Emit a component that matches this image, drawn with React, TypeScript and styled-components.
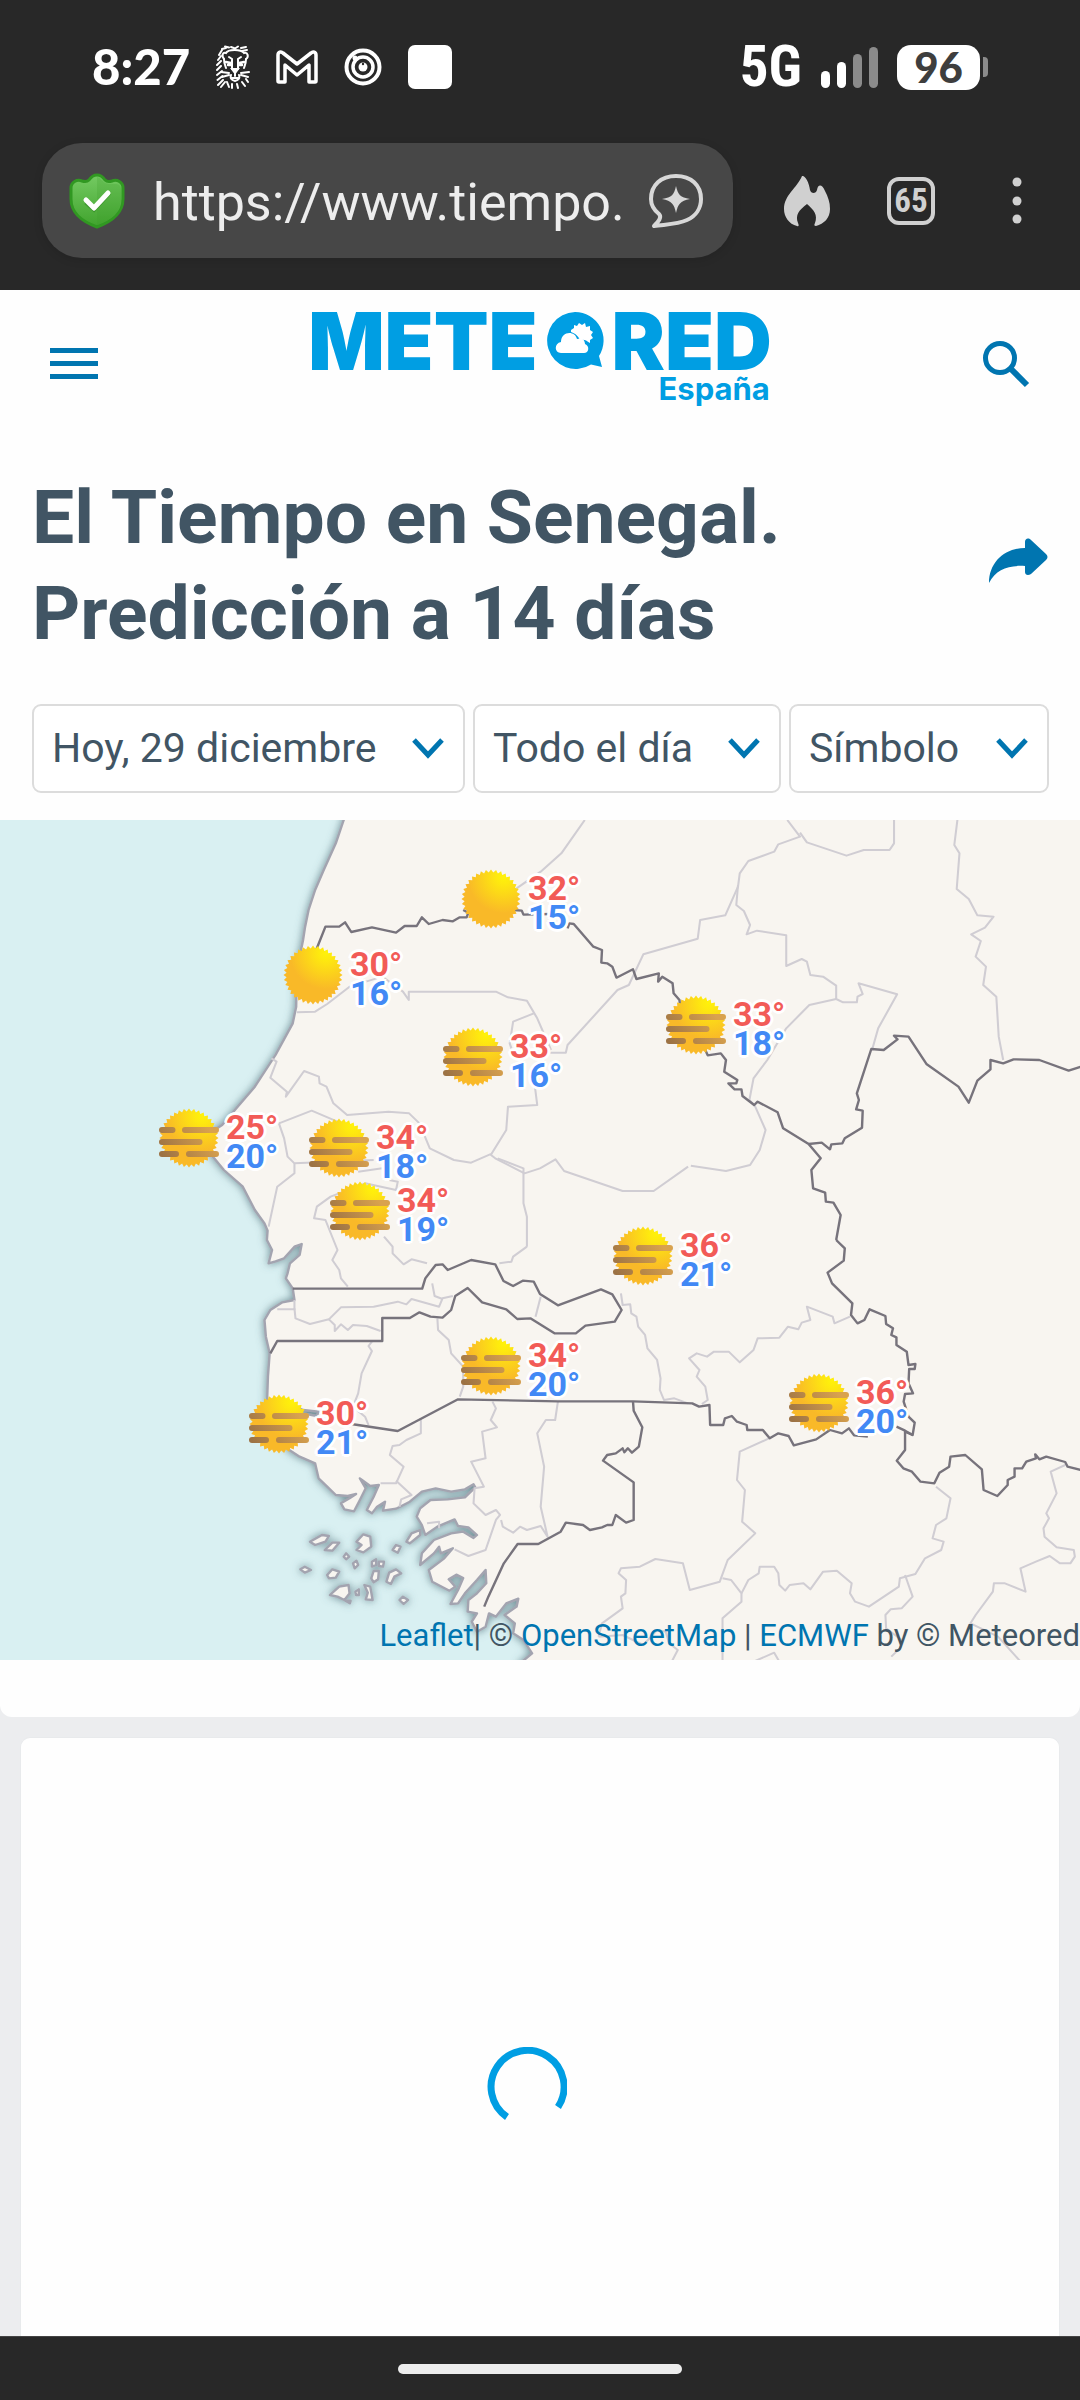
import React from 'react';
import styled, { createGlobalStyle } from 'styled-components';

const GlobalStyle = createGlobalStyle`
  *, *::before, *::after { box-sizing: border-box; }
  html, body { margin: 0; padding: 0; background: #ecedef; }
  body { font-family: Roboto, "Liberation Sans", sans-serif; color: #415564; }
  button { border: 0; padding: 0; margin: 0; background: none; font: inherit; color: inherit; cursor: pointer; }
  svg { display: block; flex: none; }
`;

/* ---------- frame ---------- */
const Screen = styled.div`
  min-height: 100vh;
  display: flex;
  flex-direction: column;
`;

const Chrome = styled.div`
  background: #282828;
  color: #fff;
  height: 290px;
`;

const StatusBar = styled.div`
  height: 143px;
  padding: 0 92px;
  padding-top: 38px;
  display: flex;
  align-items: flex-start;
  justify-content: space-between;
`;

const StatusGroup = styled.div<{ $gap: number }>`
  display: flex;
  align-items: center;
  gap: ${(p) => p.$gap}px;
  height: 58px;
`;

const Clock = styled.time`
  padding-bottom: 3px;
  font: 900 49px/54px Lato, Roboto, sans-serif;
`;

const Network = styled.span`
  font: 700 57px/58px "Roboto Condensed", "Liberation Sans Narrow", Roboto, sans-serif;
`;

const Bars = styled.span`
  display: flex;
  align-items: flex-end;
  gap: 7px;
  height: 42px;
`;

const Bar = styled.span<{ $height: number; $on: boolean }>`
  width: 9px;
  height: ${(p) => p.$height}px;
  border-radius: 5px;
  background: ${(p) => (p.$on ? '#fff' : '#8b8b8b')};
`;

const Battery = styled.span`
  display: flex;
  align-items: center;
  gap: 3px;
`;

const BatteryBody = styled.span`
  width: 83px;
  height: 45px;
  border-radius: 14px;
  background: #fff;
  color: #3e3e3e;
  text-align: center;
  font: 900 42px/44px Lato, Roboto, sans-serif;
`;

const BatteryTip = styled.span`
  width: 5px;
  height: 20px;
  border-radius: 0 4px 4px 0;
  background: #8b8b8b;
`;

const AppBadge = styled.span`
  width: 44px;
  height: 44px;
  border-radius: 7px;
  background: #fff;
`;

const Toolbar = styled.div`
  display: flex;
  align-items: center;
  padding: 0 35px 0 42px;
  color: #d0d0d0;
`;

const AddressBar = styled.form`
  flex: 1;
  min-width: 0;
  height: 115px;
  margin-right: 48px;
  padding: 0 30px 0 27px;
  border-radius: 40px;
  background: #474747;
  box-shadow: 0 2px 10px rgba(0, 0, 0, 0.12);
  display: flex;
  align-items: center;
`;

const Address = styled.input`
  flex: 1;
  min-width: 0;
  margin: 0 26px 0 28px;
  padding: 4px 0 0;
  border: 0;
  outline: 0;
  background: none;
  color: #ededed;
  font: 400 52px/64px Roboto, sans-serif;
`;

const ToolButton = styled.button`
  display: flex;
  justify-content: center;
  width: 52px;
  margin-right: 52px;
  &:last-child { margin-right: 0; width: 56px; }
`;

const TabCount = styled.span`
  width: 48px;
  height: 48px;
  border: 4px solid #d0d0d0;
  border-radius: 12px;
  text-align: center;
  font: 700 33px/40px "Roboto Condensed", "Liberation Sans Narrow", Roboto, sans-serif;
`;

/* ---------- page ---------- */
const Page = styled.main`
  flex: 1;
  display: flex;
  flex-direction: column;
`;

const Article = styled.section`
  background: #fefefe;
  border-radius: 0 0 12px 12px;
  padding-bottom: 57px;
`;

const Header = styled.header`
  height: 148px;
  padding: 0 50px;
  display: flex;
  align-items: center;
  justify-content: space-between;
`;

const Brand = styled.a`
  display: flex;
  flex-direction: column;
  align-items: flex-end;
  height: 122px;
  color: #009ee3;
  text-decoration: none;
`;

const Wordmark = styled.span`
  display: flex;
  align-items: center;
  gap: 8px;
  font: 900 80px/76px Inter, "DejaVu Sans", sans-serif;
`;

const Country = styled.span`
  padding-right: 2px;
  font: 700 31px/20px Inter, "DejaVu Sans", sans-serif;
`;

const TitleRow = styled.div`
  display: flex;
  align-items: center;
  justify-content: space-between;
  padding: 31px 32px 43px;
  > button { padding-bottom: 8px; }
`;

const Title = styled.h1`
  margin: 0;
  max-width: 840px;
  font: 700 75px/96px Roboto, sans-serif;
`;

const Filters = styled.form`
  display: flex;
  gap: 8px;
  padding: 0 31px 27px 32px;
`;

const Field = styled.label<{ $grow: number }>`
  flex: ${(p) => p.$grow} 1 0;
  min-width: 0;
  display: grid;
  align-items: center;
  > * { grid-area: 1 / 1; }
  > svg { justify-self: end; margin-right: 21px; pointer-events: none; }
`;

const Select = styled.select`
  appearance: none;
  width: 100%;
  height: 89px;
  margin: 0;
  padding: 0 56px 2px 18px;
  border: 2px solid #dcdcdc;
  border-radius: 9px;
  background: #fff;
  color: #415564;
  font: 400 41px/48px Roboto, sans-serif;
`;

const MapBox = styled.div`
  position: relative;
  height: 840px;
  overflow: hidden;
  background: #d9f0f2;
  > svg { width: 100%; height: 100%; }
`;

const Pin = styled.div`
  position: absolute;
  transform: translate(-31px, -33px);
  display: flex;
  align-items: center;
  gap: 6px;
`;

const Temps = styled.div`
  padding-top: 8px;
  font: 700 34px/29px Roboto, sans-serif;
  text-shadow: 3px 0 #fff, -3px 0 #fff, 0 3px #fff, 0 -3px #fff, 2px 2px #fff, -2px -2px #fff, 2px -2px #fff, -2px 2px #fff;
`;

const Temp = styled.div<{ $hot?: boolean }>`
  position: relative;
  color: ${(p) => (p.$hot ? '#f25b57' : '#4289f5')};
`;

const Attribution = styled.p`
  position: absolute;
  right: 0;
  bottom: 4px;
  margin: 0;
  white-space: nowrap;
  font: 400 31px/40px Roboto, sans-serif;
  a { color: #0075b0; text-decoration: none; }
`;

const Card = styled.section`
  flex: 1;
  margin: 20px 20px 0;
  min-height: 400px;
  border: 1px solid #e8eaec;
  border-bottom: 0;
  border-radius: 10px 10px 0 0;
  background: #fefefe;
  display: flex;
  justify-content: center;
  align-items: flex-start;
  padding: 309px 26px 0 0;
`;

const GestureBar = styled.footer`
  position: sticky;
  bottom: 0;
  height: 64px;
  border-top: 1px solid #444;
  background: #282828;
  display: flex;
  justify-content: center;
  align-items: center;
`;

const Handle = styled.button`
  width: 284px;
  height: 10px;
  border-radius: 5px;
  background: #ededed;
`;

/* ---------- icons ---------- */
const LionIcon = () => (
  <svg width="34" height="44" viewBox="0 0 34 44" fill="none" stroke="#fff" strokeWidth="2" strokeLinecap="round">
    <path d="M6 4l4-1M9 1.500l4 1M15 2l4 1.500 3-2M25 3l5-1M26 6l5-1M3 10l3-5M2 15l3-4M1 20l4-4M1 25l4-4M1 30l5-4M1.500 35l5-4M2 40l5-5M5 42l4-5M11 37l2 5M16 39v4M21 39l1 4M26 37l3 4M30 34l2 3" />
    <path d="M8 14C5 10 7 7 10 8c2-4 15-4 18 0 4-1 5 4 2 6" strokeWidth="2" />
    <path d="M8 14c0 4 1 6 2 9M30 14c0 4-1 6-2 9M13 12l3 2v10M25 12l-3 2v10" />
    <path d="M10 17l5 1M23 18l5-1M12 20h3M23 20h3" strokeWidth="2.500" />
    <path d="M16 24h6l-3 4z" fill="#fff" />
    <path d="M19 28v3M15 30c-1 3 0 5 4 6 4-1 5-3 4-6M16 33h6M5 27l8 1M6 32l7-2M33 27l-8 1M32 32l-7-2" />
  </svg>
);

const MailIcon = () => (
  <svg width="42" height="34" viewBox="0 0 42 34" fill="none" stroke="#fff" strokeWidth="3.500" strokeLinejoin="round">
    <path d="M2 5v26a1 1 0 0 0 1 1h6V15l12 10 12-10v17h6a1 1 0 0 0 1-1V5c0-3-3-4-5-2L21 14 7 3C5 1 2 2 2 5z" />
  </svg>
);

const TargetIcon = () => (
  <svg width="38" height="38" viewBox="0 0 38 38" fill="none" stroke="#fff">
    <circle cx="19" cy="19" r="16.500" strokeWidth="4" />
    <circle cx="19" cy="19" r="10" strokeWidth="3.500" />
    <circle cx="19" cy="19" r="4.500" fill="#fff" stroke="none" />
    <circle cx="11" cy="10" r="2.500" fill="#fff" stroke="none" />
    <circle cx="19" cy="16" r="1.200" fill="#282828" stroke="none" />
  </svg>
);

const ShieldIcon = () => (
  <svg width="56" height="56" viewBox="0 0 56 56">
    <defs>
      <linearGradient id="shield" x1="0" y1="0" x2="0" y2="1">
        <stop offset="0" stopColor="#74ca62" />
        <stop offset="1" stopColor="#40a32d" />
      </linearGradient>
    </defs>
    <path d="M28 2c4 0 6 2 8 5 2 2 4 2 7 1 5-2 11 1 11 7v11c0 14-10 22-26 28C12 48 2 40 2 26V15C2 9 8 6 13 8c3 1 5 1 7-1 2-3 4-5 8-5z" fill="url(#shield)" stroke="#319822" strokeWidth="3" />
    <path d="M28 4c4 1 5 4 8 6 6 3 15-2 16 6v10c0 13-8 20-24 26z" fill="#399c28" opacity=".22" />
    <path d="M17 29l8 7 15-16" fill="none" stroke="#277c1c" strokeWidth="5" opacity=".5" />
    <path d="M17 27l8 8 14-15" fill="none" stroke="#fff" strokeWidth="5" strokeLinecap="round" strokeLinejoin="round" />
  </svg>
);

const AssistantIcon = () => (
  <svg width="54" height="56" viewBox="0 0 54 56" fill="none">
    <path d="M27 3C12 3 2 12 2 26c0 6 3 11 8 15 3 3 0 7-5 12 16-2 24-2 33-6 9-4 14-12 14-21C52 12 42 3 27 3z" stroke="#d8d8d8" strokeWidth="4" strokeLinejoin="round" />
    <path d="M27 13c2 9 4 11 14 13-10 2-12 5-14 14-2-9-4-12-14-14 10-2 12-4 14-13z" fill="#d8d8d8" />
  </svg>
);

const FlameIcon = () => (
  <svg width="48" height="52" viewBox="0 0 48 52" fill="#d0d0d0">
    <path d="M19 1c3-1 7 6 8 14 1 4 6 4 7 0 1-6 5-6 8 1 3 6 5 11 5 18 0 9-6 15-14 17-2 0-2-1-1-3 3-8-1-13-8-19-8 6-12 11-9 19 1 2 1 4-1 3C6 49 1 42 1 34 1 20 14 13 19 1z" />
  </svg>
);

const MoreIcon = () => (
  <svg width="10" height="48" viewBox="0 0 10 48" fill="#d0d0d0">
    <circle cx="5" cy="5" r="4.500" />
    <circle cx="5" cy="24" r="4.500" />
    <circle cx="5" cy="42" r="4.500" />
  </svg>
);

const MenuIcon = () => (
  <svg width="48" height="32" viewBox="0 0 48 32" fill="#0075b0">
    <path d="M0 0h48v5H0zM0 13h48v5H0zM0 26h48v5H0z" />
  </svg>
);

const SearchIcon = () => (
  <svg width="48" height="48" viewBox="0 0 48 48" fill="none" stroke="#0075b0">
    <circle cx="18" cy="18" r="14.500" strokeWidth="5" />
    <path d="M28 28l17 17" strokeWidth="6" />
  </svg>
);

const ShareIcon = () => (
  <svg width="60" height="46" viewBox="0 0 60 46" fill="#0075b0">
    <path d="M37 4c0-3 3-5 6-2l15 14c2 2 2 4 0 6L43 36c-3 2-6 1-6-2v-6C21 27 8 31 1 45 1 24 17 10 37 10z" />
  </svg>
);

const Chevron = () => (
  <svg width="32" height="21" viewBox="0 0 32 21" fill="none" stroke="#0075b0" strokeWidth="5">
    <path d="M2 2l14 15L30 2" />
  </svg>
);

const BubbleMark = () => (
  <svg width="58" height="58" viewBox="0 0 58 58">
    <path d="M29 0a28.500 28.500 0 0 1 24 44l3 11-11-2.500A28.500 28.500 0 1 1 29 0z" fill="#009ee3" />
    <path d="M15 41c-7 0-7-10 0-11 0-11 14-12 16-3 6-2 8 2 8 5 5 2 4 9-1 9z" fill="#fff" />
    <path d="M25 18l3-2 0-3 3 1 2-3 3 2 3-2 1 4 4-1 0 4 3 2-2 3 2 3-3 2v3c-4-3-6-4-10-3-2-4-4-6-9-8z" fill="#fff" />
  </svg>
);

const Spinner = () => (
  <svg width="80" height="80" viewBox="0 0 80 80" fill="none" role="img" aria-label="Cargando">
    <path d="M20 70A36.500 36.500 0 1 1 71 60" stroke="#009ee3" strokeWidth="7" />
  </svg>
);

const sunRays = Array.from({ length: 72 }, (_, i) => {
  const r = i % 2 ? 26.5 : 29.5;
  const a = (i * Math.PI) / 36;
  return `${(31 + r * Math.cos(a)).toFixed(1)},${(31 + r * Math.sin(a)).toFixed(1)}`;
}).join(' ');

const SunIcon = ({ haze }: { haze: boolean }) => (
  <svg width="62" height="62" viewBox="0 0 62 62">
    <polygon points={sunRays} fill="url(#sun)" />
    {haze && (
      <g stroke="url(#haze)" strokeWidth="6" strokeLinecap="round">
        <path d="M4 23h10.500M27 23.010h31M4 34.990h37.500M4 46.990h14M31 47.010h27" />
      </g>
    )}
  </svg>
);

/* ---------- map ---------- */
// The survey sheet is split in four tiles; lines are stored in tile units and shifted into place.
type Tile = 'nw' | 'ne' | 'sw' | 'se';
const origin: Record<Tile, [number, number]> = { nw: [0, 0], ne: [1568, 0], sw: [0, 1230], se: [1568, 1230] };

const place = (tile: Tile, points: string) =>
  points
    .split(' ')
    .map((pair) => {
      const [x, y] = pair.split(',').map(Number);
      return `${x + origin[tile][0]},${y + origin[tile][1]}`;
    })
    .join(' ');

const land = [
  place('nw', '3220,-60 1030,-60 998,30 975,100 940,180 915,240 896,300 886,350 880,390 862,480 860,590 850,640 800,735 740,830 690,890 645,945 600,975 610,1030 650,1080 705,1130 740,1200 768,1240 777,1262'),
  place('sw', '775,60 790,90 780,130 800,124 825,115 855,80 876,72 870,105 842,130 835,160 830,175 850,205 855,240 820,247 785,270 768,300 772,350 783,400 778,470 775,560 790,540 850,555 880,570 925,575 920,588 880,580 800,590 790,630 840,690 870,710 915,730 925,775 950,800 975,825 1010,828 1034,822 1015,835 990,850 1000,868 1028,874 1045,840 1062,805 1045,775 1075,798 1100,795 1085,830 1065,870 1080,880 1095,860 1118,845 1112,872 1150,866 1190,845 1225,815 1265,805 1310,815 1350,808 1375,793 1380,802 1350,832 1300,838 1250,840 1220,865 1210,890 1225,915 1235,945 1270,920 1320,898 1330,918 1360,922 1385,945 1375,954 1345,935 1310,940 1260,960 1225,1000 1220,1035 1260,1000 1275,980 1280,1000 1315,985 1290,1015 1245,1050 1255,1085 1305,1112 1322,1100 1303,1078 1325,1064 1345,1074 1330,1110 1308,1152 1330,1150 1350,1120 1385,1080 1410,1050 1412,1090 1385,1120 1360,1140 1358,1175 1385,1180 1370,1205 1385,1235 1410,1220 1420,1180 1440,1190 1470,1150 1505,1136 1500,1160 1465,1185 1495,1210 1490,1240 1520,1260 1545,1300 1510,1330 1510,1400 3220,1400'),
].join(' ');

const islands = [
  '900,965 935,945 955,948 945,965 915,975', '943,990 965,968 985,968 965,992', '1035,965 1055,943 1075,950 1078,980 1055,997 1035,990 1050,975',
  '1180,965 1195,940 1220,930 1220,945 1190,970', '1140,990 1150,975 1163,980 1155,998', '872,1048 885,1040 903,1050 885,1058', '950,1065 965,1048 985,1055 975,1073 955,1075',
  '998,1010 1005,1000 1014,1010 1005,1018', '1025,1030 1035,1022 1040,1035 1030,1045', '1080,1025 1092,1018 1092,1035 1080,1040', '1100,1025 1115,1025 1112,1040 1100,1038',
  '1078,1075 1085,1053 1100,1053 1098,1078 1085,1087', '1122,1085 1130,1058 1150,1048 1165,1060 1145,1070 1135,1092', '958,1125 985,1100 1012,1095 1015,1120 1000,1140 980,1130',
  '1032,1115 1042,1108 1042,1125 1034,1125', '1058,1095 1075,1100 1082,1140 1062,1138 1068,1118', '1160,1140 1170,1130 1185,1140 1172,1152', '1003,1142 1018,1142 1016,1150',
].map((p) => place('sw', p));

const frontiers = [
  place('nw', '918,420 945,350 985,350 1002,337 1020,366 1080,352 1150,368 1175,348 1210,348 1225,322 1245,342 1285,330 1315,334 1335,322 1355,322 1360,308 1345,300'),
  place('nw', '1490,300 1515,302 1520,314 1600,312'),
  place('ne', '80,355 85,340 98,342 155,410 180,420 178,458 195,460 210,470 222,503 270,478 280,507 345,490 343,515 355,500 385,520 388,550 405,570 410,620'),
  place('ne', '480,720 487,736 525,730 540,750 535,785 573,810 570,820 547,820 565,838 585,838 588,858 622,885 632,875 690,907 706,955 780,1002 815,1045 788,1080 793,1135 828,1148 830,1175 852,1178 873,1215 860,1290'),
  place('ne', '780,1002 818,998 842,1018 846,1003 878,1000 885,985 935,953 937,902 918,898 926,870 920,850 962,717 998,720 1038,688 1028,677 1070,680 1122,762 1215,830 1245,878 1270,812 1308,778 1308,750 1345,760 1375,748 1450,750 1535,782 1570,770'),
  place('se', '860,60 885,85 882,122 835,158 848,190 907,250 903,285 922,310 942,300 957,268 1003,288 1005,312 1025,325 1020,345 1035,352 1035,375 1065,395 1070,435 1090,432 1088,447 1072,447 1070,490 1083,520 1060,522 1056,545 1070,590 1088,608 1082,645 1060,635 1060,690 1036,722 1055,745 1080,755 1105,785 1145,790 1160,758 1188,740 1192,710 1235,705 1283,748 1288,810 1328,828 1358,795 1358,780 1378,770 1378,745 1400,745 1412,725 1440,715 1438,703 1450,718 1470,710 1525,726 1532,740 1570,750'),
  place('sw', '850,206 1226,206 1235,175 1265,135 1285,133 1300,150 1368,120 1438,133 1462,183 1490,198 1518,182 1550,185 1568,222 1620,256 1745,208 1778,223 1805,270 1785,305 1700,317 1672,340 1610,340 1540,295 1502,297 1470,268 1400,247 1358,204 1322,228 1310,270 1285,293 1250,290 1218,277 1190,294 1110,294 1110,363 805,363 785,400'),
  place('sw', '1020,612 1155,633 1330,538 1620,544 1838,544 2010,550 2030,560 2060,555 2062,615 2100,615 2105,595 2125,588 2140,605 2168,615 2170,630 2215,630 2235,655 2260,640 2290,648 2305,676 2370,658 2410,630 2445,640 2465,625 2480,646 2520,650'),
  place('se', '270,544 272,572 297,622 287,680 267,698 255,685 245,697 240,685 220,700 195,705 183,722 272,787 272,900 250,908 220,885 210,915 195,915 180,922 145,930 125,915 75,908 60,935 -5,972 -65,972 -105,1030 -150,1130 -162,1160'),
  place('se', '1035,620 1060,632 1082,645'),
];

const districts = [
  place('nw', '862,607 915,605 950,582 1015,530 1110,500 1170,545 1187,570 1187,545 1440,545 1475,562 1530,572 1560,625 1600,720'),
  place('nw', '1550,610 1490,635 1480,700 1490,730'),
  place('nw', '1500,235 1570,185 1630,130 1698,30'),
  place('ne', '30,728 75,728 80,705 225,540 258,525 300,433 458,386 465,330 538,316 575,230 580,190 605,153 680,125 692,103 755,80 718,30'),
  place('ne', '755,68 775,97 890,137 940,120 1015,120 1028,100 1028,30'),
  place('ne', '575,225 570,285 592,303 610,345 600,373 630,362 715,376 715,468 760,447 775,455 785,495 822,500 860,527 860,567 880,577 920,577 922,560 937,552 925,520 1037,553 982,655 965,717'),
  place('ne', '860,567 782,585 715,655 660,750 620,805 608,870 625,890 655,960 638,1020 610,1065 540,1083 438,1067'),
  place('ne', '1212,30 1203,105 1218,130 1210,237 1245,267 1270,316 1317,320 1292,353 1252,373 1280,393 1265,440 1295,470 1287,525 1325,560 1332,680 1345,750'),
  place('ne', '430,1070 330,1143 240,1143 70,1083 45,1048 0,1075 -45,1090 -130,1045 -145,1033 -200,1058 -250,1050 -320,1015 -350,940 -380,910 -440,905 -560,915 -600,880 -620,830 -640,820 -642,800 -685,783 -738,860 -735,845 -783,803 -765,755 -780,745'),
  place('nw', '1425,1035 1470,960 1475,890 1560,885 1552,820'),
  place('nw', '1445,1045 1520,1075 1520,1180 1530,1220 1530,1310'),
  place('sw', '1530,80 1490,110 1485,125 1450,130'),
  place('nw', '810,940 905,902 980,935'),
  place('nw', '810,940 825,985 835,1040 855,1060 1085,1050'),
  place('nw', '855,1060 855,1090 805,1130 780,1250'),
  place('nw', '1040,1085 1110,1075 1130,1110 1155,1115 1150,1140 1060,1120 960,1160 920,1190 912,1225 945,1230 980,1320 965,1350 985,1380 990,1405 1010,1430'),
  place('sw', '1115,50 1140,80 1140,100 1172,133 1195,118 1240,130'),
  place('sw', '855,265 858,295 900,312 955,298 990,262 1085,260 1155,245 1180,253 1195,237 1275,260 1285,235 1315,228'),
  place('sw', '1255,190 1262,228 1285,237'),
  place('sw', '955,298 972,315 972,333 990,313 1010,330 1025,315 1065,318 1105,333'),
  place('sw', '805,268 855,268 855,240'),
  place('sw', '1080,365 1070,378 1080,393 1050,460 1040,520 1025,560 1060,590 1070,615'),
  place('sw', '1270,295 1272,330 1303,360 1310,400 1345,440 1345,500 1335,530'),
  place('sw', '1570,230 1555,290'),
  place('sw', '1222,595 1222,640 1180,660 1160,675 1140,678 1132,705 1172,740 1150,790 1105,790'),
  place('sw', '1430,545 1440,565 1425,600 1443,622 1400,635 1410,715 1368,725 1405,800 1378,805 1375,850 1410,885 1440,870 1452,885 1440,900 1410,990 1360,1008 1320,988'),
  place('sw', '1150,782 1195,825 1165,838 1160,860'),
  place('sw', '1240,910 1275,905 1275,925'),
  place('sw', '1455,900 1460,920 1490,938 1510,920 1530,930 1570,918 1590,950 1570,860 1580,740 1560,640 1585,600 1612,600 1620,545'),
  place('se', '235,220 240,255 262,253 265,280 280,290 285,320 305,345 312,385 340,420 350,475 348,510 360,540 390,535 430,550'),
  place('se', '470,552 487,540 480,500 455,470 463,450 433,415 455,400 485,410 505,395 548,395 580,427 620,390 632,355 695,353 720,320 750,328 760,308 785,300 775,260 850,290 855,310 900,290'),
  place('se', '665,655 580,695 572,780 595,810 587,905 625,940 545,1020 522,1085 435,1110 415,1030 335,1017 290,1040 235,1045 228,1060 250,1080 248,1120 235,1130 240,1165 180,1210 170,1250'),
  place('se', '530,1075 555,1080 585,1120 585,1145 530,1195 530,1330'),
  place('se', '585,1120 605,1080 635,1060 638,1040 680,1040 692,1060 695,1095 712,1112 725,1095 765,1090 785,1108 822,1055 862,1052 905,1090 900,1120 915,1145 955,1160 1042,1100 1045,1075 1090,1062 1118,1015 1165,990 1172,965 1140,955 1150,915 1180,895 1192,835 1150,800'),
  place('se', '1060,1065 1082,1130 1050,1165 1018,1168 1003,1185 1005,1225 1050,1260 1045,1285 1020,1310'),
  place('se', '1525,735 1483,755 1500,820 1470,880 1478,895 1462,925 1465,950 1500,982 1550,990 1553,1010 1540,1030 1510,1030 1480,1008 1440,1025 1395,1045 1410,1115 1350,1090 1318,1090 1315,1115 1265,1185 1250,1210 1330,1250 1400,1330'),
  place('se', '170,1250 240,1245 300,1275 340,1230 365,1235 375,1270 400,1290 380,1330'),
  place('se', '620,1325 680,1298 695,1325'),
];

type Reading = { x: number; y: number; max: number; min: number; haze: boolean };
const readings: Reading[] = [
  { x: 491, y: 79, max: 32, min: 15, haze: false },
  { x: 313, y: 155, max: 30, min: 16, haze: false },
  { x: 473, y: 237, max: 33, min: 16, haze: true },
  { x: 696, y: 205, max: 33, min: 18, haze: true },
  { x: 189, y: 318, max: 25, min: 20, haze: true },
  { x: 339, y: 328, max: 34, min: 18, haze: true },
  { x: 360, y: 391, max: 34, min: 19, haze: true },
  { x: 643, y: 436, max: 36, min: 21, haze: true },
  { x: 491, y: 546, max: 34, min: 20, haze: true },
  { x: 279, y: 604, max: 30, min: 21, haze: true },
  { x: 819, y: 583, max: 36, min: 20, haze: true },
];

const CountryMap = () => (
  <svg viewBox="0 0 1080 840" preserveAspectRatio="none" role="img" aria-label="Mapa de Senegal">
    <defs>
      <radialGradient id="sun" cx=".72" cy=".12" r=".62">
        <stop offset="0" stopColor="#fff20a" />
        <stop offset=".2" stopColor="#fee90f" />
        <stop offset="1" stopColor="#f9b928" />
      </radialGradient>
      <linearGradient id="haze" gradientUnits="userSpaceOnUse" x1="4" y1="48" x2="50" y2="20">
        <stop offset="0" stopColor="#9c7244" />
        <stop offset="1" stopColor="#d9a24e" />
      </linearGradient>
      <filter id="coast" x="-5%" y="-5%" width="110%" height="110%">
        <feDropShadow dx="0" dy="0" stdDeviation="13" floodColor="#4c6a74" floodOpacity=".75" />
      </filter>
    </defs>
    <g transform="translate(0 -10) scale(.344388 .333333)" strokeLinejoin="round">
      <g fill="#f8f5f0" stroke="#a3a4b0" strokeWidth="7" filter="url(#coast)">
        <polygon points={land} />
        {islands.map((p) => <polygon key={p} points={p} />)}
      </g>
      <g fill="none" stroke="#d0cdd3" strokeWidth="6">
        {districts.map((p) => <polyline key={p} points={p} />)}
      </g>
      <g fill="none" stroke="#77737c" strokeWidth="7">
        {frontiers.map((p) => <polyline key={p} points={p} />)}
      </g>
    </g>
  </svg>
);

const signal = [
  { h: 17, on: true },
  { h: 26, on: true },
  { h: 34, on: false },
  { h: 41, on: false },
];

export default function App() {
  return (
    <Screen>
      <GlobalStyle />
      <Chrome>
        <StatusBar>
          <StatusGroup $gap={26}>
            <Clock>8:27</Clock>
            <LionIcon />
            <MailIcon />
            <TargetIcon />
            <AppBadge />
          </StatusGroup>
          <StatusGroup $gap={19}>
            <Network>5G</Network>
            <Bars>
              {signal.map((s) => <Bar key={s.h} $height={s.h} $on={s.on} />)}
            </Bars>
            <Battery>
              <BatteryBody>96</BatteryBody>
              <BatteryTip />
            </Battery>
          </StatusGroup>
        </StatusBar>
        <Toolbar>
          <AddressBar>
            <ShieldIcon />
            <Address aria-label="Dirección" defaultValue="https://www.tiempo.com" />
            <AssistantIcon />
          </AddressBar>
          <ToolButton aria-label="Borrar datos"><FlameIcon /></ToolButton>
          <ToolButton aria-label="Pestañas"><TabCount>65</TabCount></ToolButton>
          <ToolButton aria-label="Más opciones"><MoreIcon /></ToolButton>
        </Toolbar>
      </Chrome>

      <Page>
        <Article>
          <Header>
            <button aria-label="Menú"><MenuIcon /></button>
            <Brand href="#">
              <Wordmark>METE<BubbleMark />RED</Wordmark>
              <Country>España</Country>
            </Brand>
            <button aria-label="Buscar"><SearchIcon /></button>
          </Header>

          <TitleRow>
            <Title>El Tiempo en Senegal. Predicción a 14 días</Title>
            <button aria-label="Compartir"><ShareIcon /></button>
          </TitleRow>

          <Filters>
            <Field $grow={433}>
              <Select aria-label="Día"><option>Hoy, 29 diciembre</option></Select>
              <Chevron />
            </Field>
            <Field $grow={308}>
              <Select aria-label="Hora"><option>Todo el día</option></Select>
              <Chevron />
            </Field>
            <Field $grow={260}>
              <Select aria-label="Vista"><option>Símbolo</option></Select>
              <Chevron />
            </Field>
          </Filters>

          <MapBox>
            <CountryMap />
            {readings.map((r) => (
              <Pin key={`${r.x}-${r.y}`} style={{ left: `${(r.x / 1080) * 100}%`, top: `${(r.y / 840) * 100}%` }}>
                <SunIcon haze={r.haze} />
                <Temps>
                  <Temp $hot>{r.max}°</Temp>
                  <Temp>{r.min}°</Temp>
                </Temps>
              </Pin>
            ))}
            <Attribution>
              <a href="#">Leaflet</a>| © <a href="#">OpenStreetMap</a> | <a href="#">ECMWF</a> by © Meteored
            </Attribution>
          </MapBox>
        </Article>

        <Card><Spinner /></Card>
      </Page>

      <GestureBar><Handle aria-label="Inicio" /></GestureBar>
    </Screen>
  );
}
